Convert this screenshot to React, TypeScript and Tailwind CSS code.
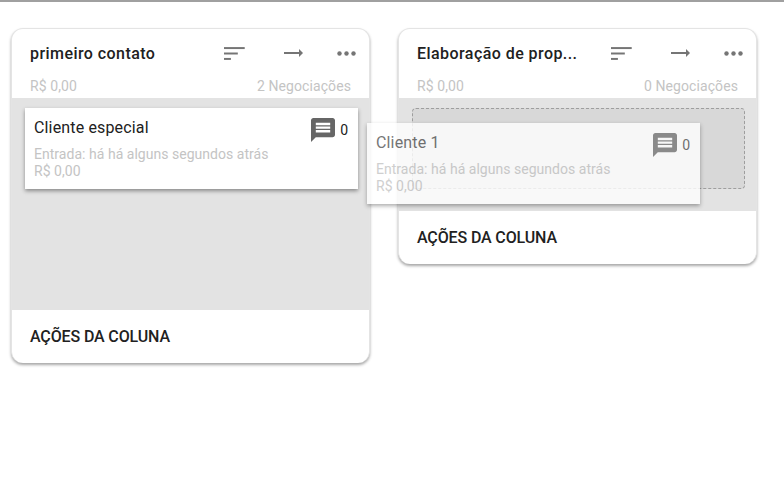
const font = { fontFamily: 'Roboto, "Liberation Sans", sans-serif' }

function SortIcon() {
  return (
    <svg width="21" height="13" viewBox="0 0 21 13" fill="#757575">
      <rect x="0" y="0" width="21" height="2" />
      <rect x="0" y="5.5" width="14" height="2" />
      <rect x="0" y="11" width="7" height="2" />
    </svg>
  )
}

function ArrowIcon() {
  return (
    <svg width="19" height="8" viewBox="0 0 19 8" fill="#757575">
      <rect x="0" y="3" width="15" height="2" />
      <path d="M15 0l4 4-4 4z" />
    </svg>
  )
}

function DotsIcon() {
  return (
    <svg width="19" height="5" viewBox="0 0 19 5" fill="#757575">
      <circle cx="2.5" cy="2.5" r="2.2" />
      <circle cx="9.5" cy="2.5" r="2.2" />
      <circle cx="16.5" cy="2.5" r="2.2" />
    </svg>
  )
}

function CommentIcon({ fill }: { fill: string }) {
  return (
    <svg width="24" height="24" viewBox="2 2 20 20" fill={fill}>
      <path d="M20 2H4c-1.1 0-2 .9-2 2v18l4-4h14c1.1 0 2-.9 2-2V4c0-1.1-.9-2-2-2zm-2 12H6v-2h12v2zm0-3H6V9h12v2zm0-3H6V6h12v2z" />
    </svg>
  )
}

function DealCard({ title, ghost }: { title: string; ghost?: boolean }) {
  return (
    <div className="h-[81px] w-[333px] bg-white pl-[9px] pr-[10px] pt-[10px] shadow-[0_2px_4px_rgba(0,0,0,0.4)]">
      <div className="flex h-[27px] items-start justify-between">
        <div className={`text-[16px] leading-[20px] tracking-[0.15px] ${ghost ? 'text-[#555555]' : 'text-[#212121]'}`}>
          {title}
        </div>
        <div className={`flex items-center gap-[5px] text-[14px] ${ghost ? 'text-[#555555]' : 'text-[#212121]'}`}>
          <CommentIcon fill={ghost ? '#777777' : '#666666'} />
          <span>0</span>
        </div>
      </div>
      <div className="text-[14px] leading-[18px] tracking-[0.03px] text-[#c4c4c4]">
        Entrada: há há alguns segundos atrás
      </div>
      <div className="text-[14px] leading-[16px] tracking-[0.03px] text-[#c4c4c4]">R$ 0,00</div>
    </div>
  )
}

function Column({
  title,
  count,
  bodyClass,
  children,
}: {
  title: string
  count: string
  bodyClass: string
  children: React.ReactNode
}) {
  return (
    <div className="w-[359px] shrink-0 overflow-hidden rounded-[12px] border border-[#e4e4e4] border-b-0 bg-white shadow-[0_2px_3px_rgba(0,0,0,0.35)]">
      <div className="h-[69px] pl-[18px] pr-[13px]">
        <div className="flex h-[49px] items-center">
          <div className="w-[197px] truncate text-[16px] font-medium tracking-[0.44px] text-[#212121]">{title}</div>
          <SortIcon />
          <div className="ml-[39px] -mt-[1px]">
            <ArrowIcon />
          </div>
          <div className="ml-[34px] -mt-[1px]">
            <DotsIcon />
          </div>
        </div>
        <div className="flex items-center justify-between pr-[5px] text-[14px] leading-[16px] tracking-[0.08px] text-[#c4c4c4]">
          <span className="-mt-[1px]">R$ 0,00</span>
          <span>{count}</span>
        </div>
      </div>
      <div className={`bg-[#e3e3e3] ${bodyClass}`}>{children}</div>
      <div className="flex h-[53px] items-center pl-[18px] text-[16px] font-medium tracking-[-0.13px] text-[#212121]">
        AÇÕES DA COLUNA
      </div>
    </div>
  )
}

export default function App() {
  return (
    <div className="relative h-[503px] w-[784px] overflow-hidden bg-white" style={font}>
      <div className="h-[2px] bg-[#a0a0a0]" />
      <div className="flex items-start gap-[28px] pl-[11px] pt-[26px]">
        <Column title="primeiro contato" count="2 Negociações" bodyClass="h-[212px] pl-[13px] pt-[10px]">
          <DealCard title="Cliente especial" />
        </Column>
        <Column title="Elaboração de prop..." count="0 Negociações" bodyClass="h-[113px] pl-[13px] pt-[10px]">
          <div className="h-[81px] w-[333px] rounded-[4px] border border-dashed border-[#9e9e9e] bg-[#d8d8d8]" />
        </Column>
        <div className="h-[236px] w-[100px] shrink-0 rounded-[12px] border border-[#e4e4e4]" />
      </div>
      <div className="absolute left-[367px] top-[123px] opacity-80">
        <DealCard title="Cliente 1" ghost />
      </div>
    </div>
  )
}
